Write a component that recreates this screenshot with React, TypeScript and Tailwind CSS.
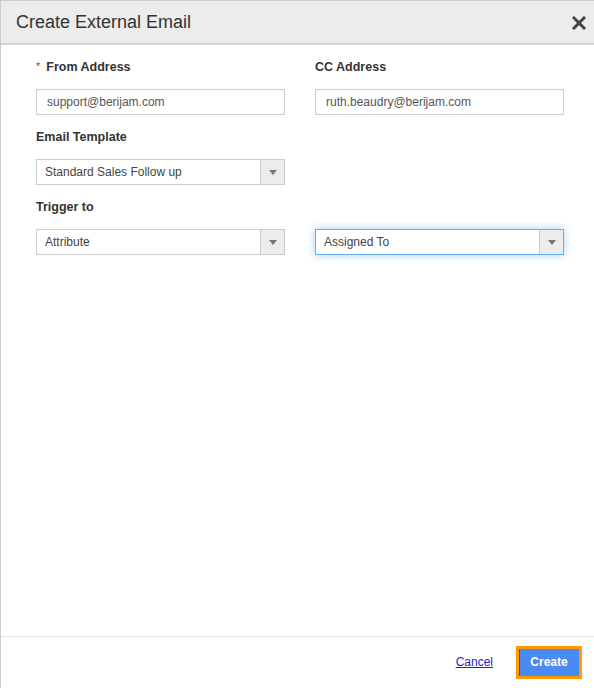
import React from "react";

const font = { fontFamily: '"Liberation Sans", Arial, sans-serif' };

function Label({ text, required }: { text: string; required?: boolean }) {
  return (
    <div className="h-[18px] flex items-center text-[12.5px] font-bold text-[#333] leading-[18px]">
      {required && <span className="text-[#e02020] text-[11px] font-normal mr-[6px] -mt-[3px]">*</span>}
      {text}
    </div>
  );
}

function TextBox({ value }: { value: string }) {
  return (
    <div className="mt-[13px] h-[26px] border border-[#ccc] bg-white flex items-center pl-[10px] text-[12px] text-[#555]">
      {value}
    </div>
  );
}

function Select({ value, focused }: { value: string; focused?: boolean }) {
  return (
    <div
      className={
        focused
          ? "mt-[13px] h-[26px] border border-[#66afe9] shadow-[0_0_8px_rgba(102,175,233,0.6)] bg-white flex"
          : "mt-[13px] h-[26px] border border-[#ccc] bg-white flex"
      }
    >
      <div className="flex-1 flex items-center pl-[8px] text-[12px] text-[#444]">{value}</div>
      <div className="w-[24px] bg-[#ececec] border-l border-[#ccc] flex items-center justify-center">
        <svg width="8" height="5" viewBox="0 0 8 5">
          <path d="M0 0 L8 0 L4 5 Z" fill="#777" />
        </svg>
      </div>
    </div>
  );
}

export default function App() {
  return (
    <div style={font} className="w-[594px] h-[688px] bg-white border-l border-t border-[#ccc] flex flex-col">
      <div className="h-[44px] shrink-0 bg-[#ececec] border-b-2 border-[#d4d4d4] flex items-center justify-between pl-[15px] pr-[8px]">
        <h1 className="text-[18px] text-[#333] font-normal leading-none">Create External Email</h1>
        <svg width="14" height="14" viewBox="0 0 14 14" className="mt-[2px]">
          <path d="M2 2 L12 12 M12 2 L2 12" stroke="#444" strokeWidth="3" strokeLinecap="square" />
        </svg>
      </div>

      <div className="flex-1 pt-[13px] pl-[35px]">
        <div className="grid grid-cols-[249px_249px] gap-x-[30px]">
          <div className="mb-[13px]">
            <Label text="From Address" required />
            <TextBox value="support@berijam.com" />
          </div>
          <div className="mb-[13px]">
            <Label text="CC Address" />
            <TextBox value="ruth.beaudry@berijam.com" />
          </div>
          <div className="mb-[13px]">
            <Label text="Email Template" />
            <Select value="Standard Sales Follow up" />
          </div>
          <div />
          <div className="mb-[13px]">
            <Label text="Trigger to" />
            <Select value="Attribute" />
          </div>
          <div className="mb-[13px]">
            <div className="h-[18px]" />
            <Select value="Assigned To" focused />
          </div>
        </div>
      </div>

      <div className="h-[52px] shrink-0 border-t border-[#e2e2e2] flex items-center justify-end pr-[12px] pb-[1px]">
        <a href="#" className="text-[12px] text-[#2222cc] underline mr-[23px]">
          Cancel
        </a>
        <button className="h-[33px] w-[66px] border-[3px] border-[#ff9900] bg-[#4a8af4] text-white text-[12px] font-bold shadow-[inset_1px_0_0_#2a5bb8]">
          Create
        </button>
      </div>
    </div>
  );
}
